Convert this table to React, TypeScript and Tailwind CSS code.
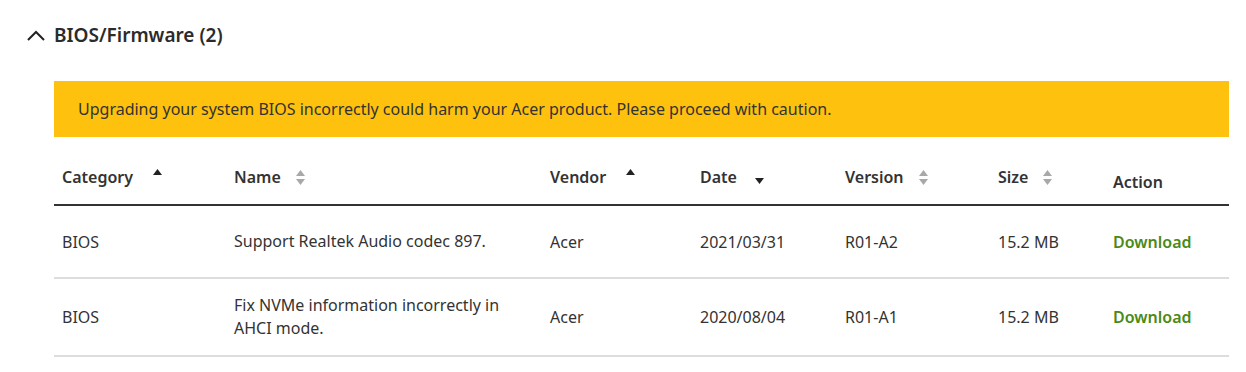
import React from 'react'

type Row = {
  category: string
  name: string
  vendor: string
  date: string
  version: string
  size: string
}

const rows: Row[] = [
  { category: 'BIOS', name: 'Support Realtek Audio codec 897.', vendor: 'Acer', date: '2021/03/31', version: 'R01-A2', size: '15.2 MB' },
  { category: 'BIOS', name: 'Fix NVMe information incorrectly in AHCI mode.', vendor: 'Acer', date: '2020/08/04', version: 'R01-A1', size: '15.2 MB' },
]

// sort indicator: up, down or both (unsorted)
const SortIcon = ({ dir }: { dir: 'asc' | 'desc' | 'none' }) => {
  if (dir === 'asc') {
    return (
      <svg width="9" height="6" viewBox="0 0 9 6" className="ml-[20px] -mt-[10px]">
        <path d="M4.5 0 L9 6 L0 6 Z" fill="#222" />
      </svg>
    )
  }
  if (dir === 'desc') {
    return (
      <svg width="9" height="6" viewBox="0 0 9 6" className="ml-[18px] mt-[8px]">
        <path d="M0 0 L9 0 L4.5 6 Z" fill="#222" />
      </svg>
    )
  }
  return (
    <svg width="9" height="15" viewBox="0 0 9 15" className="ml-[15px]">
      <path d="M4.5 0 L9 6 L0 6 Z" fill="#a8a8a8" />
      <path d="M0 9 L9 9 L4.5 15 Z" fill="#a8a8a8" />
    </svg>
  )
}

const HeadCell = ({ label, dir }: { label: string; dir: 'asc' | 'desc' | 'none' }) => (
  <th className="px-2 pt-[15px] pb-[15px] text-left font-semibold align-middle">
    <div className="flex items-center">
      <span>{label}</span>
      <SortIcon dir={dir} />
    </div>
  </th>
)

export default function App() {
  return (
    <div className="bg-white w-[1246px] h-[372px] text-[#333]" style={{ fontFamily: '"Noto Sans", "Open Sans", sans-serif' }}>
      <div className="flex items-center pt-[22px] pl-[27px]">
        <svg width="18" height="11" viewBox="0 0 18 11" fill="none" stroke="#222" strokeWidth="2">
          <path d="M1 10 L9 2 L17 10" />
        </svg>
        <h2 className="ml-[9px] text-[19px] font-semibold leading-[26px] text-[#2b2b2b]">BIOS/Firmware (2)</h2>
      </div>

      <div className="ml-[54px] mr-[17px] mt-[33px]">
        <div className="bg-[#fec10d] h-[56px] flex items-center pl-[24px] text-[16px] text-[#333]">
          Upgrading your system BIOS incorrectly could harm your Acer product. Please proceed with caution.
        </div>

        <table className="w-full table-fixed border-collapse text-[16px] mt-[13px]">
          <colgroup>
            <col className="w-[172px]" />
            <col className="w-[316px]" />
            <col className="w-[150px]" />
            <col className="w-[145px]" />
            <col className="w-[153px]" />
            <col className="w-[115px]" />
            <col />
          </colgroup>
          <thead>
            <tr className="border-b-2 border-[#333]">
              <HeadCell label="Category" dir="asc" />
              <HeadCell label="Name" dir="none" />
              <HeadCell label="Vendor" dir="asc" />
              <HeadCell label="Date" dir="desc" />
              <HeadCell label="Version" dir="none" />
              <HeadCell label="Size" dir="none" />
              <th className="px-2 pt-[20px] pb-[10px] text-left font-semibold align-middle">Action</th>
            </tr>
          </thead>
          <tbody>
            {rows.map((r) => (
              <tr key={r.version} className="border-b-2 border-[#dddddd] h-[73px]">
                <td className="px-2 py-[14px] align-middle">{r.category}</td>
                <td className="px-2 py-[15px] align-middle leading-[23px] pr-[30px]">{r.name}</td>
                <td className="px-2 py-[14px] align-middle">{r.vendor}</td>
                <td className="px-2 py-[14px] align-middle">{r.date}</td>
                <td className="px-2 py-[14px] align-middle">{r.version}</td>
                <td className="px-2 py-[14px] align-middle">{r.size}</td>
                <td className="px-2 py-[14px] align-middle">
                  <a href="#" className="font-semibold text-[#4b8a17]">Download</a>
                </td>
              </tr>
            ))}
          </tbody>
        </table>
      </div>
    </div>
  )
}
